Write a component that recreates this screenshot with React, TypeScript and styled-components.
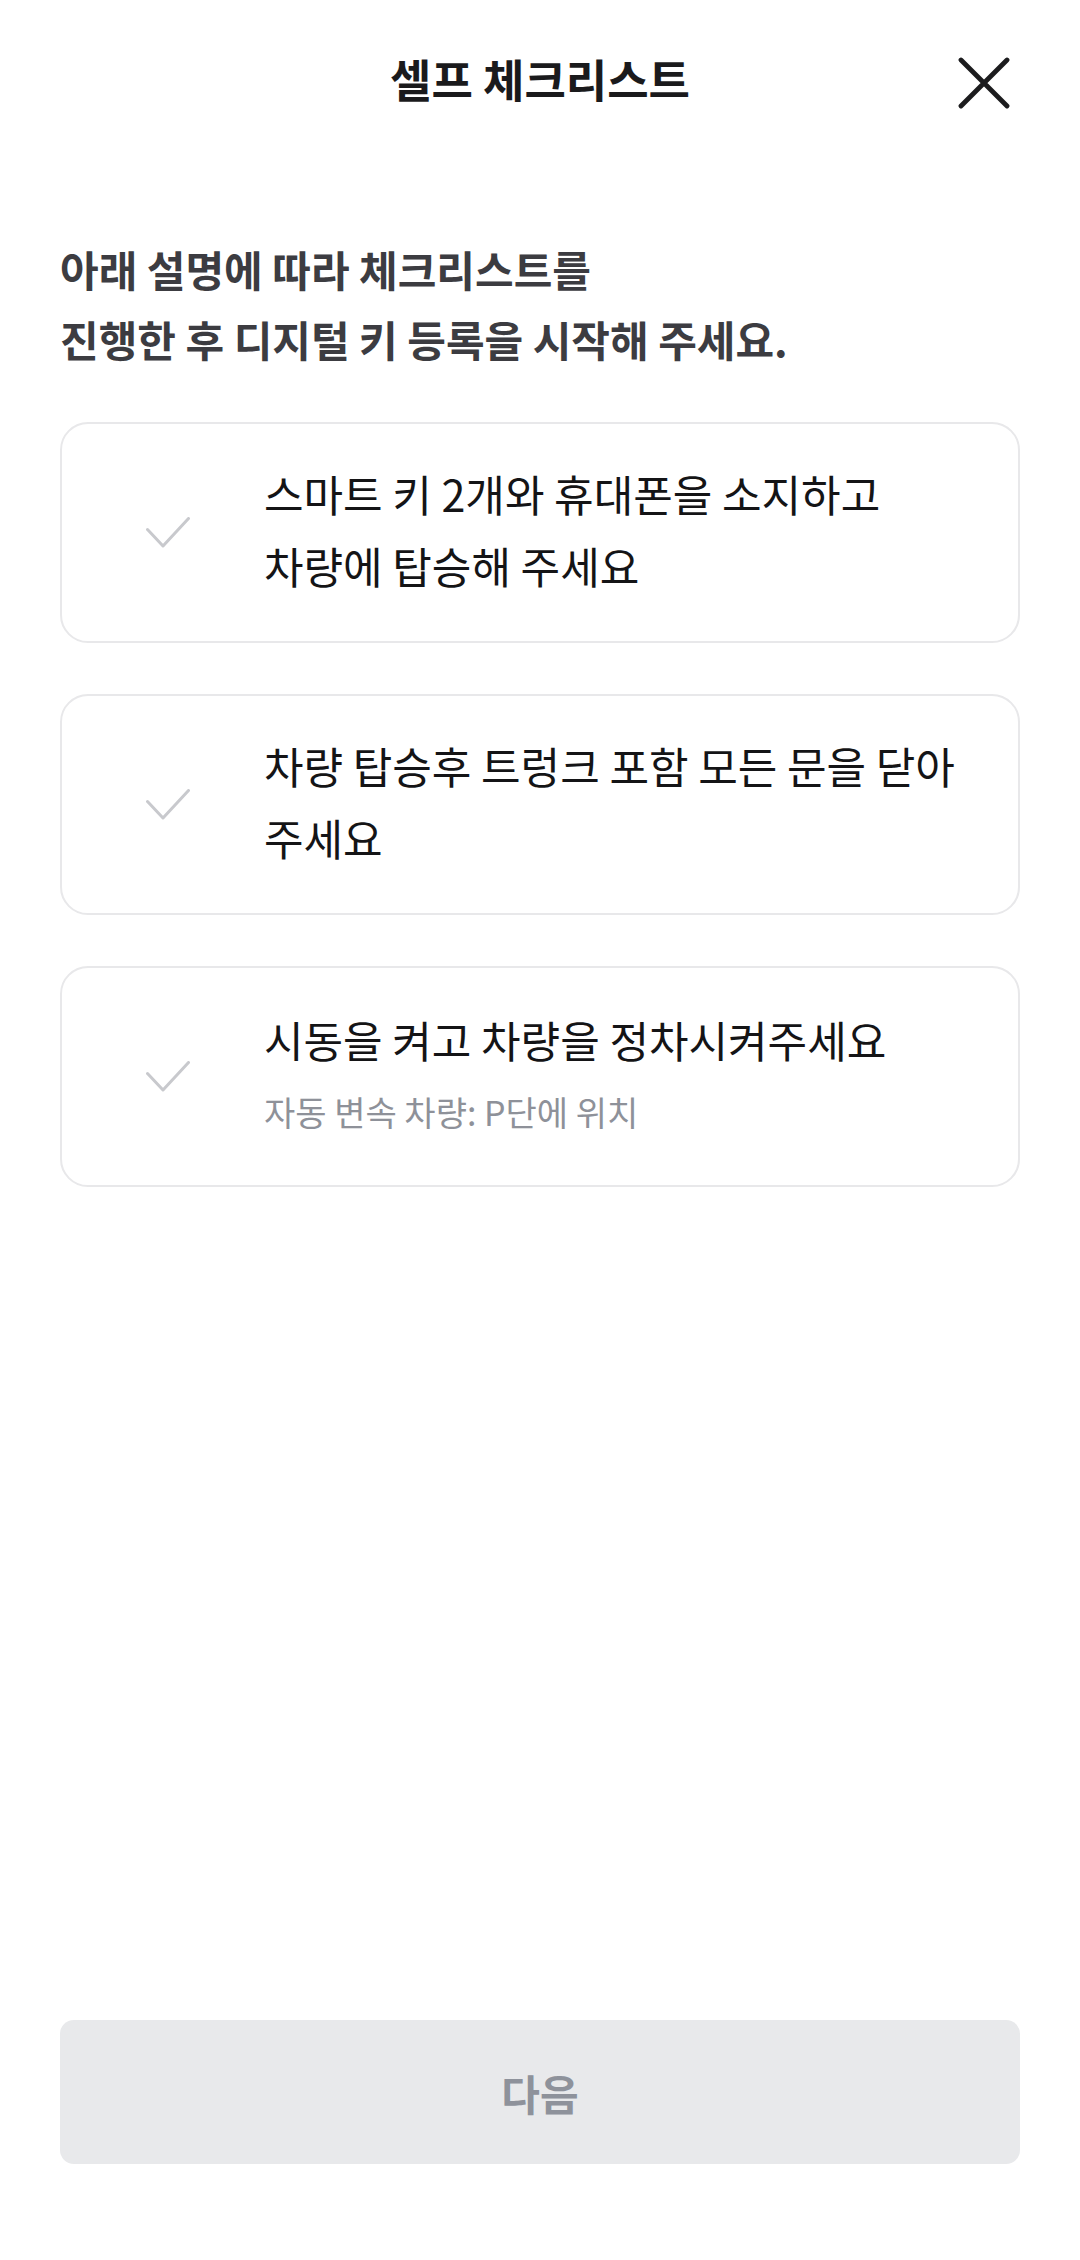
import React from 'react';
import styled, { createGlobalStyle } from 'styled-components';

const GlobalStyle = createGlobalStyle`
  * {
    box-sizing: border-box;
  }

  body {
    margin: 0;
    background: #ffffff;
    font-family: 'Noto Sans CJK KR', 'Noto Sans', sans-serif;
    -webkit-font-smoothing: antialiased;
  }
`;

// 체크리스트 항목 데이터
const checkItems = [
  { lines: ['스마트 키 2개와 휴대폰을 소지하고', '차량에 탑승해 주세요'] },
  { lines: ['차량 탑승후 트렁크 포함 모든 문을 닫아', '주세요'] },
  { lines: ['시동을 켜고 차량을 정차시켜주세요'], sub: '자동 변속 차량: P단에 위치' },
];

const CheckIcon = () => (
  <svg width="44" height="31" viewBox="0 0 44 31" fill="none">
    <polyline
      points="1.5,12.5 17,29 42.5,1.5"
      stroke="#c8c9cd"
      strokeWidth="3"
      strokeLinecap="round"
      strokeLinejoin="round"
    />
  </svg>
);

const CloseIcon = () => (
  <svg width="52" height="52" viewBox="0 0 52 52" fill="none">
    <path d="M3 3 L49 49 M49 3 L3 49" stroke="#1c1c1e" strokeWidth="4.8" strokeLinecap="round" />
  </svg>
);

const SelfChecklist = () => {
  return (
    <Page>
      {/* 상단 헤더 */}
      <Header>
        <Title>셀프 체크리스트</Title>
        <CloseButton aria-label="닫기">
          <CloseIcon />
        </CloseButton>
      </Header>

      <Content>
        {/* 안내 문구 */}
        <Intro>
          아래 설명에 따라 체크리스트를
          <br />
          진행한 후 디지털 키 등록을 시작해 주세요.
        </Intro>

        {/* 체크리스트 카드 */}
        <CardList>
          {checkItems.map((item, i) => (
            <Card key={i}>
              <IconBox>
                <CheckIcon />
              </IconBox>
              <CardBody $withSub={!!item.sub}>
                <CardText $withSub={!!item.sub}>
                  {item.lines.map((line, j) => (
                    <React.Fragment key={j}>
                      {j > 0 && <br />}
                      {line}
                    </React.Fragment>
                  ))}
                </CardText>
                {item.sub && <SubText>{item.sub}</SubText>}
              </CardBody>
            </Card>
          ))}
        </CardList>
      </Content>

      {/* 하단 버튼 */}
      <Footer>
        <NextButton disabled>다음</NextButton>
      </Footer>
    </Page>
  );
};

const Page = styled.div`
  width: 1080px;
  min-height: 2260px;
  display: flex;
  flex-direction: column;
  background: #ffffff;
`;

const Header = styled.header`
  position: relative;
  height: 168px;
  display: flex;
  align-items: center;
  justify-content: center;
`;

const Title = styled.h1`
  margin: 0 0 12px;
  font-size: 45px;
  font-weight: 700;
  color: #1a1a1c;
  line-height: 1;
`;

// 닫기 버튼 (헤더 위에 겹침)
const CloseButton = styled.button`
  position: absolute;
  right: 70px;
  top: 57px;
  width: 52px;
  height: 52px;
  padding: 0;
  border: none;
  background: none;
  display: flex;
  cursor: pointer;
`;

const Content = styled.main`
  flex: 1;
  padding: 66px 60px 0;
`;

const Intro = styled.p`
  margin: 0;
  font-size: 42px;
  font-weight: 700;
  line-height: 70px;
  color: #3c3c41;
`;

const CardList = styled.div`
  margin-top: 48px;
  display: flex;
  flex-direction: column;
  gap: 51px;
`;

const Card = styled.div`
  min-height: 221px;
  display: flex;
  align-items: center;
  padding: 0 30px 0 84px;
  border: 2px solid #e8e8ea;
  border-radius: 28px;
  background: #ffffff;
`;

const IconBox = styled.div`
  width: 44px;
  flex-shrink: 0;
  margin-right: 74px;
  display: flex;
`;

const CardBody = styled.div<{ $withSub?: boolean }>`
  display: flex;
  flex-direction: column;
  padding-bottom: ${(p) => (p.$withSub ? '14px' : '8px')};
`;

const CardText = styled.div<{ $withSub?: boolean }>`
  font-size: 43px;
  font-weight: 400;
  line-height: ${(p) => (p.$withSub ? '70px' : '72px')};
  color: #141416;
  white-space: nowrap;
`;

const SubText = styled.div`
  margin-top: 14px;
  font-size: 34px;
  line-height: 48px;
  color: #8e9199;
`;

const Footer = styled.footer`
  padding: 0 60px 96px;
`;

const NextButton = styled.button`
  width: 100%;
  height: 144px;
  border: none;
  border-radius: 14px;
  background: #e8e9eb;
  font-family: inherit;
  font-size: 42px;
  font-weight: 700;
  color: #8e929b;
  cursor: default;
`;

export default function App() {
  return (
    <>
      <GlobalStyle />
      <SelfChecklist />
    </>
  );
}
